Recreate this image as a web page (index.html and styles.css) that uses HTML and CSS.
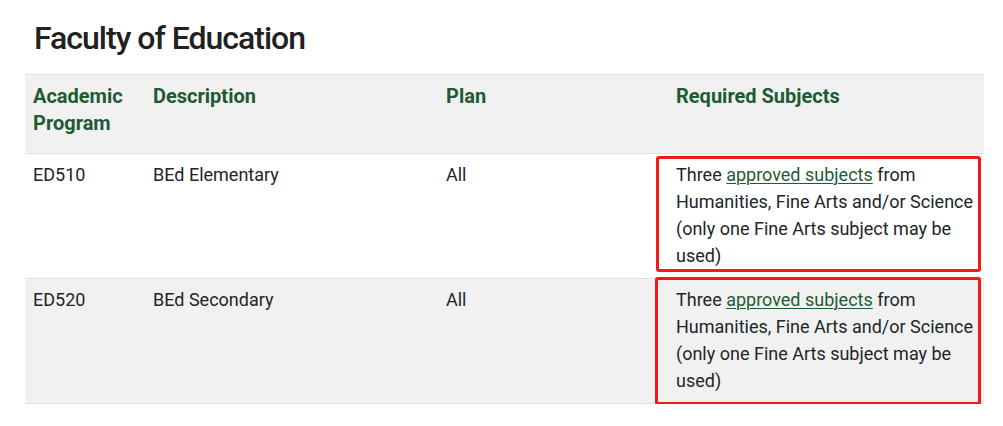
FILE: index.html
```html
<!DOCTYPE html>
<html lang="en">
<head>
<meta charset="utf-8">
<title>Faculty of Education</title>
<link rel="stylesheet" href="styles.css">
</head>
<body>
<div class="page">
  <h1 class="title">Faculty of Education</h1>
  <table class="req-table">
    <colgroup>
      <col class="c-prog">
      <col class="c-desc">
      <col class="c-plan">
      <col class="c-req">
    </colgroup>
    <thead>
      <tr class="row row-shaded">
        <th>Academic Program</th>
        <th>Description</th>
        <th>Plan</th>
        <th>Required Subjects</th>
      </tr>
    </thead>
    <tbody>
      <tr class="row">
        <td>ED510</td>
        <td>BEd Elementary</td>
        <td>All</td>
        <td class="req mark-a">Three <a href="#" class="link">approved subjects</a> from Humanities, Fine Arts and/or Science (only one Fine Arts subject may be used)</td>
      </tr>
      <tr class="row row-shaded">
        <td>ED520</td>
        <td>BEd Secondary</td>
        <td>All</td>
        <td class="req mark-b">Three <a href="#" class="link">approved subjects</a> from Humanities, Fine Arts and/or Science (only one Fine Arts subject may be used)</td>
      </tr>
    </tbody>
  </table>
</div>
</body>
</html>
```

FILE: styles.css
```css
html, body {
  margin: 0;
  padding: 0;
  background: #ffffff;
}

body {
  font-family: Roboto, "Liberation Sans", Arial, sans-serif;
  color: #212529;
}

.page {
  width: 959px;
  padding: 18px 0 0 25px;
}

.title {
  margin: 0 0 16px 0;
  padding-left: 9px;
  font-size: 32px;
  line-height: 40px;
  font-weight: 500;
  letter-spacing: -1px;
  color: #212121;
}

.req-table {
  width: 959px;
  border-collapse: collapse;
  table-layout: fixed;
  font-size: 18px;
  line-height: 27px;
  border-bottom: 1px solid #e0e0e0;
}

.c-prog { width: 120px; }
.c-desc { width: 293px; }
.c-plan { width: 230px; }
.c-req { width: 316px; }

.row {
  border-top: 1px solid #e0e0e0;
}

.row-shaded {
  background: #f1f1f1;
}

.req-table th {
  text-align: left;
  vertical-align: top;
  font-size: 20px;
  font-weight: 700;
  color: #1f5a34;
  padding: 8px 8px 16px 8px;
}

.req-table td {
  vertical-align: top;
  padding: 7px 4px 9px 8px;
  font-weight: 400;
}

.link {
  color: #1f5a34;
  text-decoration: underline;
  text-underline-offset: 2px;
  text-decoration-thickness: 1px;
}

.req {
  position: relative;
}

.req::after {
  content: "";
  position: absolute;
  border: 3px solid #f01a1a;
  border-radius: 3px;
  pointer-events: none;
}

.mark-a::after {
  left: -12px;
  right: 3px;
  top: 2px;
  bottom: 6px;
}

.mark-b::after {
  left: -13px;
  right: 3px;
  top: -2px;
  bottom: -2px;
}
```
